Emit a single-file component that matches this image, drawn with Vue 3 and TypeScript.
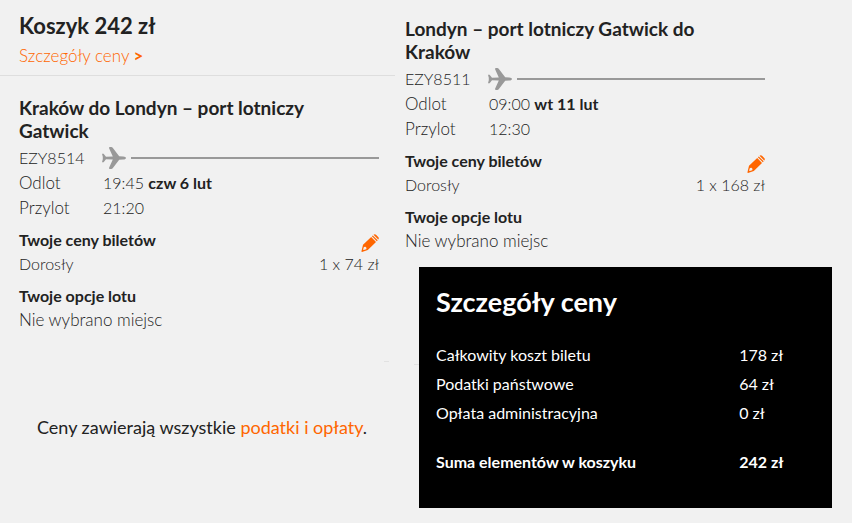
<script setup lang="ts">
interface Flight {
  id: string
  title: string
  number: string
  departTime: string
  departDate: string
  arriveTime: string
  fare: string
}

interface PriceLine {
  label: string
  amount: string
}

const outbound: Flight = {
  id: 'out',
  title: 'Kraków do Londyn – port lotniczy Gatwick',
  number: 'EZY8514',
  departTime: '19:45',
  departDate: 'czw 6 lut',
  arriveTime: '21:20',
  fare: '1 x 74 zł',
}

const inbound: Flight = {
  id: 'in',
  title: 'Londyn – port lotniczy Gatwick do Kraków',
  number: 'EZY8511',
  departTime: '09:00',
  departDate: 'wt 11 lut',
  arriveTime: '12:30',
  fare: '1 x 168 zł',
}

const columns: Flight[] = [outbound, inbound]

const priceLines: PriceLine[] = [
  { label: 'Całkowity koszt biletu', amount: '178 zł' },
  { label: 'Podatki państwowe', amount: '64 zł' },
  { label: 'Opłata administracyjna', amount: '0 zł' },
]
</script>

<template>
  <main class="basket">
    <div v-for="flight in columns" :key="flight.id" class="column" :class="flight.id">
      <header v-if="flight.id === 'out'" class="summary">
        <h1>Koszyk 242 zł</h1>
        <a href="#price-details">Szczegóły ceny <b>&gt;</b></a>
      </header>

      <section class="flight">
        <h2>{{ flight.title }}</h2>
        <div class="route">
          <span>{{ flight.number }}</span>
          <svg class="plane" viewBox="0 0 24 22" aria-hidden="true">
            <path
              d="M0 6.800h1.600L4 9.700l6.800-.2L7.200 1.500C6.800.6 7.200 0 8 0h1.200c.7 0 1.100.3 1.500.8l6.500 8.400 4 .2c1.700.1 2.800.8 2.800 1.600s-1.100 1.500-2.800 1.600l-4 .2-6.500 8.400c-.4.5-.8.8-1.500.8H8c-.8 0-1.200-.6-.8-1.500l3.600-8-6.800-.2-2.400 2.900H0l.9-3.500L.6 11l.3-.7z"
            />
          </svg>
          <span class="track"></span>
        </div>
        <dl class="times">
          <dt>Odlot</dt>
          <dd>{{ flight.departTime }} <b>{{ flight.departDate }}</b></dd>
          <dt>Przylot</dt>
          <dd>{{ flight.arriveTime }}</dd>
        </dl>

        <div class="block">
          <div class="line">
            <h3>Twoje ceny biletów</h3>
            <button type="button" class="edit" aria-label="Edytuj">
              <svg viewBox="0 0 18 18" aria-hidden="true">
                <path
                  fill-rule="evenodd"
                  d="M2 10.800 10.200 3l4.800 4.900-8.200 8L1 18l-.6-.6zM2.900 13.100l-.8 2.300.7.700 2.300-.8.500-1.300-1.100-1.200z"
                />
                <path d="m10.900 2.300.9-.9 4.900 4.900-.9.9zM12.500.8c.7-.8 1.800-.8 2.500 0l2.200 2.200c.8.7.8 1.800 0 2.500z" />
              </svg>
            </button>
          </div>
          <div class="line">
            <span>Dorosły</span>
            <span>{{ flight.fare }}</span>
          </div>
        </div>

        <div class="block">
          <h3>Twoje opcje lotu</h3>
          <p>Nie wybrano miejsc</p>
        </div>
      </section>

      <template v-if="flight.id === 'out'">
        <div class="tick"></div>
        <p class="note">Ceny zawierają wszystkie <a href="#price-details">podatki i opłaty</a>.</p>
      </template>

      <div v-else class="details-row">
        <div class="tick"></div>
        <section id="price-details" class="details">
          <h2>Szczegóły ceny</h2>
          <table>
            <tbody>
              <tr v-for="line in priceLines" :key="line.label">
                <th scope="row">{{ line.label }}</th>
                <td>{{ line.amount }}</td>
              </tr>
            </tbody>
            <tfoot>
              <tr>
                <th scope="row">Suma elementów w koszyku</th>
                <td>242 zł</td>
              </tr>
            </tfoot>
          </table>
        </section>
      </div>
    </div>
  </main>
</template>

<style>
body {
  margin: 0;
  background: #f1f1f1;
}
</style>

<style scoped>
.basket {
  display: grid;
  grid-template-columns: 395fr 457fr;
  font-family: Lato, "Open Sans", sans-serif;
  font-size: 16px;
  font-weight: 300;
  line-height: 24px;
  color: #222;
}

h1, h2, h3, p, dl, dd {
  margin: 0;
}

h1, h2, h3 {
  font-weight: 700;
}

b {
  font-weight: 700;
}

a {
  color: #ff6600;
  text-decoration: none;
}

.summary {
  padding: 12px 19px 7px;
  border-bottom: 1px solid #dedede;
}

.summary h1 {
  margin-bottom: 4px;
  font-size: 22px;
  line-height: 28px;
}

.summary a {
  display: block;
  font-size: 17px;
}

.flight {
  max-width: 360px;
}

.out .flight {
  padding: 20px 16px 0 19px;
}

.in .flight {
  padding: 17px 16px 0 10px;
}

.flight h2 {
  margin-bottom: 3px;
  padding-right: 40px;
  font-size: 19px;
  line-height: 23px;
}

.route {
  display: grid;
  grid-template-columns: 83px 24px 1fr;
  align-items: center;
  line-height: 25px;
}

.plane {
  width: 24px;
  height: 22px;
  fill: #999;
}

.track {
  height: 2px;
  margin-left: 5px;
  background: #999;
}

.times {
  display: grid;
  grid-template-columns: 84px 1fr;
  line-height: 25px;
}

.times dt, .block p {
  font-size: 17px;
}

.block {
  margin-top: 8px;
}

.line {
  display: flex;
  justify-content: space-between;
}

h3 {
  font-size: 16px;
}

.edit {
  align-self: end;
  width: 18px;
  height: 18px;
  padding: 0;
  border: 0;
  background: none;
  cursor: pointer;
}

.edit svg {
  display: block;
  fill: #ff6600;
}

.tick {
  width: 5px;
  height: 1px;
  background: #e2e2e2;
}

.out > .tick {
  margin: 29px 6px 0 auto;
}

.note {
  padding: 53px 19px 0 37px;
  font-size: 18px;
  font-weight: 400;
}

.details-row {
  display: flex;
  padding: 14px 20px 15px 19px;
}

.details-row .tick {
  margin-top: 97px;
}

.details {
  flex: 1;
  padding: 17px 17px 32px;
  background: #000;
  color: #fff;
}

.details h2 {
  margin-bottom: 20px;
  font-size: 27px;
  line-height: 36px;
}

table {
  width: 100%;
  border-collapse: collapse;
  font-weight: 400;
  line-height: 29px;
}

th, td {
  padding: 0;
  text-align: left;
  font-weight: 400;
}

th {
  width: 80%;
}

tfoot th, tfoot td {
  padding-top: 20px;
  font-weight: 700;
}
</style>
